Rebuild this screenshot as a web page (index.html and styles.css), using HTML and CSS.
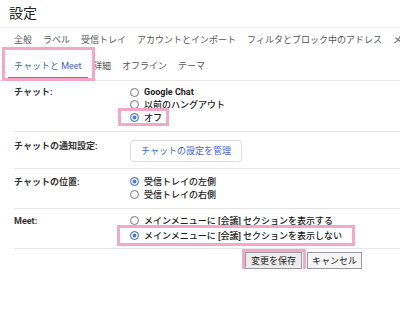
FILE: index.html
```html
<!DOCTYPE html>
<html lang="ja">
<head>
    <meta charset="UTF-8">
    <title>設定</title>
    <link rel="stylesheet" href="styles.css">
</head>
<body>
    <div class="page">
        <!-- 見出し -->
        <h1 class="title">設定</h1>

        <!-- タブ -->
        <nav class="tabs">
            <div class="tab-row first">
                <a class="tab">全般</a>
                <a class="tab">ラベル</a>
                <a class="tab">受信トレイ</a>
                <a class="tab">アカウントとインポート</a>
                <a class="tab">フィルタとブロック中のアドレス</a>
                <a class="tab">メール転送と POP/IMAP</a>
            </div>
            <div class="tab-row second">
                <a class="tab active hl">チャットと Meet</a>
                <a class="tab">詳細</a>
                <a class="tab">オフライン</a>
                <a class="tab">テーマ</a>
            </div>
        </nav>

        <!-- 設定項目 -->
        <div class="settings">
            <div class="row row-chat">
                <div class="label">チャット:</div>
                <div class="options">
                    <label class="opt latin"><input type="radio" name="chat">Google Chat</label>
                    <label class="opt"><input type="radio" name="chat">以前のハングアウト</label>
                    <label class="opt hl hl-off"><input type="radio" name="chat" checked>オフ</label>
                </div>
            </div>
            <div class="row row-notify">
                <div class="label">チャットの通知設定:</div>
                <div class="options">
                    <button class="link-btn">チャットの設定を管理</button>
                </div>
            </div>
            <div class="row row-pos">
                <div class="label">チャットの位置:</div>
                <div class="options">
                    <label class="opt"><input type="radio" name="pos" checked>受信トレイの左側</label>
                    <label class="opt"><input type="radio" name="pos">受信トレイの右側</label>
                </div>
            </div>
            <div class="row row-meet">
                <div class="label">Meet:</div>
                <div class="options">
                    <label class="opt"><input type="radio" name="meet">メインメニューに [会議] セクションを表示する</label>
                    <label class="opt hl hl-meet"><input type="radio" name="meet" checked>メインメニューに [会議] セクションを表示しない</label>
                </div>
            </div>
        </div>

        <!-- 保存ボタン -->
        <div class="actions">
            <button class="btn save hl">変更を保存</button>
            <button class="btn">キャンセル</button>
        </div>
    </div>
</body>
</html>
```

FILE: styles.css
```css
/* 全体 */
body {
    margin: 0;
    background: #fff;
    font-family: Roboto, "Noto Sans CJK JP", sans-serif;
    font-size: 9px;
    color: #202124;
}
.page {
    width: 400px;
    overflow: hidden;
}
.title {
    margin: 0;
    padding: 4px 9px;
    font-size: 14px;
    font-weight: normal;
    line-height: 19px;
    color: #222;
    border-bottom: 1px solid #efefef;
}

/* タブ */
.tabs {
    border-bottom: 1px solid #e8e8e8;
}
.tab-row {
    display: flex;
    white-space: nowrap;
}
.tab-row.first {
    height: 25px;
    line-height: 25px;
    padding-left: 14px;
    gap: 11px;
}
.tab-row.second {
    padding-left: 8px;
}
.tab {
    color: #555;
}
.tab-row.second .tab {
    padding: 2px 5.5px 0;
    line-height: 22px;
    border-bottom: 3px solid transparent;
}
.tab-row.second .tab.active {
    padding: 2px 6px 0;
    color: #3d5fc6;
    border-bottom-color: #5a7be0;
}

/* 設定行 */
.row {
    display: grid;
    grid-template-columns: 116px 1fr;
    margin-left: 14px;
    border-bottom: 1px solid #e6e6e6;
}
.label {
    line-height: 12.5px;
    font-weight: 700;
    color: #333;
}
.options {
    display: flex;
    flex-direction: column;
    align-items: flex-start;
}
.opt {
    display: flex;
    align-items: center;
    height: 12.5px;
    font-weight: 500;
    color: #222;
}
.opt.latin {
    font-weight: 700;
}
.opt input {
    appearance: none;
    width: 9px;
    height: 9px;
    margin: 0 5px 0 0;
    border: 1px solid #777;
    border-radius: 50%;
    background: #fff;
}
.opt input:checked {
    border-color: #4a78e6;
    background: #4a78e6;
    box-shadow: inset 0 0 0 1.5px #fff;
}
.row-chat {
    padding: 5px 0 7px;
}
.row-notify {
    padding: 8px 0 6px;
}
.row-pos {
    padding: 7px 0 7px;
}
.row-meet {
    padding: 6px 0 6px;
}
.row-meet .opt + .opt {
    margin-top: 2px;
}
.link-btn {
    height: 22px;
    padding: 0 10px;
    border: 1px solid #dadce0;
    border-radius: 4px;
    background: #fff;
    color: #3b67cc;
    font-family: inherit;
    font-size: 9px;
}

/* ボタン */
.actions {
    display: flex;
    gap: 5px;
    padding: 3.5px 0 0 245px;
}
.btn {
    height: 17px;
    padding: 0;
    border: 1px solid #9a9a9a;
    background: #f5f5f5;
    color: #222;
    font-family: inherit;
    font-size: 9px;
}
.btn.save {
    width: 57px;
    background: #ececec;
}
.btn + .btn {
    width: 55px;
}

/* ピンクの強調枠 */
.hl {
    position: relative;
}
.hl::after {
    content: "";
    position: absolute;
    border: 3px solid #f3a8c8;
    pointer-events: none;
}
.tab.hl::after {
    top: -6px;
    right: -7px;
    bottom: -4px;
    left: -6px;
}
.hl-off::after {
    top: -3px;
    right: -7px;
    bottom: -2px;
    left: -12px;
}
.hl-meet::after {
    top: -4px;
    right: -13px;
    bottom: -4px;
    left: -13px;
}
.btn.hl::after {
    top: -4px;
    right: -5px;
    bottom: -4px;
    left: -4px;
}
```
